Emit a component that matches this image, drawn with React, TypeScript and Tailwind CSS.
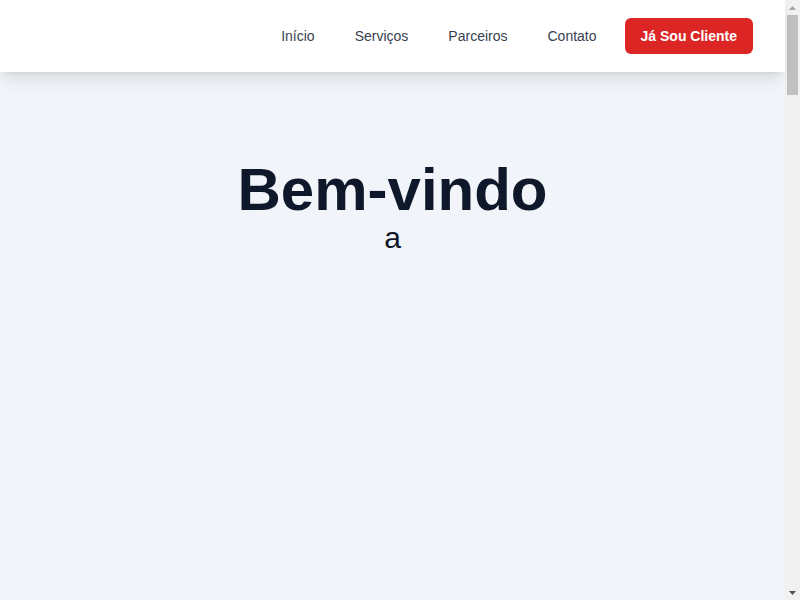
export default function App() {
  const links = ["Início", "Serviços", "Parceiros", "Contato"];
  return (
    <div className="flex h-[600px] overflow-hidden bg-[#f1f5f9]" style={{ fontFamily: '"Liberation Sans", Arial, sans-serif' }}>
      <div className="flex-1 min-w-0">
        <header className="relative z-10 h-[72px] bg-white shadow-lg flex items-center justify-between px-8">
          <div />
          <nav className="flex items-center">
            {links.map((l) => (
              <a key={l} href="#" className="px-5 text-sm text-[#374151]">
                {l}
              </a>
            ))}
            <a href="#" className="ml-2 rounded-md bg-[#dc2626] px-4 py-2 text-sm font-bold text-white">
              Já Sou Cliente
            </a>
          </nav>
        </header>
        <section className="pt-[88px] text-center">
          <h1 className="text-6xl font-bold leading-none text-[#0f172a]">Bem-vindo</h1>
          <p className="text-3xl text-[#0f172a]">a</p>
        </section>
      </div>
      <div className="flex w-[15px] shrink-0 flex-col bg-[#f1f1f1]">
        <div className="flex h-[15px] items-center justify-center">
          <svg width="7" height="4" viewBox="0 0 7 4"><polygon points="3.5,0 7,4 0,4" fill="#a3a3a3" /></svg>
        </div>
        <div className="flex-1 px-[2px]">
          <div className="h-[80px] bg-[#c1c1c1]" />
        </div>
        <div className="flex h-[15px] items-center justify-center">
          <svg width="7" height="4" viewBox="0 0 7 4"><polygon points="0,0 7,0 3.5,4" fill="#505050" /></svg>
        </div>
      </div>
    </div>
  );
}
